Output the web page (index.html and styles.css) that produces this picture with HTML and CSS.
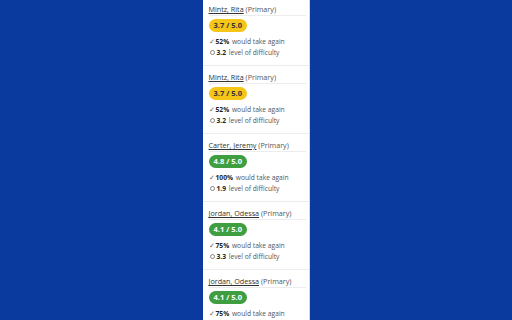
FILE: index.html
```html
<!DOCTYPE html>
<html>
<head>
    <title>Professor Ratings</title>
    <link rel="stylesheet" href="styles.css">
</head>
<body>
    <div class="panel">
        <div class="prof-list">
            <div class="prof">
                <div class="prof-name"><a href="#">Mintz, Rita</a> (Primary)</div>
                <span class="badge badge-ok">3.7 / 5.0</span>
                <div class="stat"><span class="icon">✓</span><b>52%</b> would take again</div>
                <div class="stat"><span class="icon ring"></span><b>3.2</b> level of difficulty</div>
            </div>
            <div class="prof">
                <div class="prof-name"><a href="#">Mintz, Rita</a> (Primary)</div>
                <span class="badge badge-ok">3.7 / 5.0</span>
                <div class="stat"><span class="icon">✓</span><b>52%</b> would take again</div>
                <div class="stat"><span class="icon ring"></span><b>3.2</b> level of difficulty</div>
            </div>
            <div class="prof">
                <div class="prof-name"><a href="#">Carter, Jeremy</a> (Primary)</div>
                <span class="badge badge-good">4.8 / 5.0</span>
                <div class="stat"><span class="icon">✓</span><b>100%</b> would take again</div>
                <div class="stat"><span class="icon ring"></span><b>1.9</b> level of difficulty</div>
            </div>
            <div class="prof">
                <div class="prof-name"><a href="#">Jordan, Odessa</a> (Primary)</div>
                <span class="badge badge-good">4.1 / 5.0</span>
                <div class="stat"><span class="icon">✓</span><b>75%</b> would take again</div>
                <div class="stat"><span class="icon ring"></span><b>3.3</b> level of difficulty</div>
            </div>
            <div class="prof">
                <div class="prof-name"><a href="#">Jordan, Odessa</a> (Primary)</div>
                <span class="badge badge-good">4.1 / 5.0</span>
                <div class="stat"><span class="icon">✓</span><b>75%</b> would take again</div>
                <div class="stat"><span class="icon ring"></span><b>3.3</b> level of difficulty</div>
            </div>
        </div>
    </div>
</body>
</html>
```

FILE: styles.css
```css
html, body {
    height: 100%;
}
body {
    margin: 0;
    background: #0b3a9e;
    font-family: "Open Sans", Arial, sans-serif;
    overflow: hidden;
}
.panel {
    width: 106px;
    height: 100%;
    margin: 0 auto;
    background: white;
    border-right: 1px solid #d8d8d8;
    overflow: hidden;
}
.prof-list {
    margin-top: -2px;
}
.prof {
    padding: 6px 3px 7px 6px;
    border-bottom: 1px solid #ececec;
}
.prof-name {
    font-size: 7.2px;
    line-height: 10px;
    color: #555;
    padding-bottom: 1px;
    border-bottom: 1px solid #ececec;
    white-space: nowrap;
}
.prof-name a {
    color: #333;
    text-decoration: underline;
}
.badge {
    display: block;
    width: fit-content;
    margin: 3px 0 4px;
    height: 13px;
    line-height: 13px;
    padding: 0 5px;
    border-radius: 7px;
    font-size: 7.5px;
    font-weight: bold;
}
.badge-ok { background: #f5c518; color: #333; }
.badge-good { background: #3f9e3f; color: white; }
.stat {
    font-size: 6.7px;
    line-height: 11px;
    color: #555;
    white-space: nowrap;
}
.stat b {
    color: #222;
    margin-right: 1px;
}
.icon {
    display: inline-block;
    width: 7px;
    color: #666;
}
.ring {
    width: 3px;
    height: 3px;
    border: 1px solid #888;
    border-radius: 50%;
    margin: 0 2px 0 1px;
    vertical-align: 0;
}
```
